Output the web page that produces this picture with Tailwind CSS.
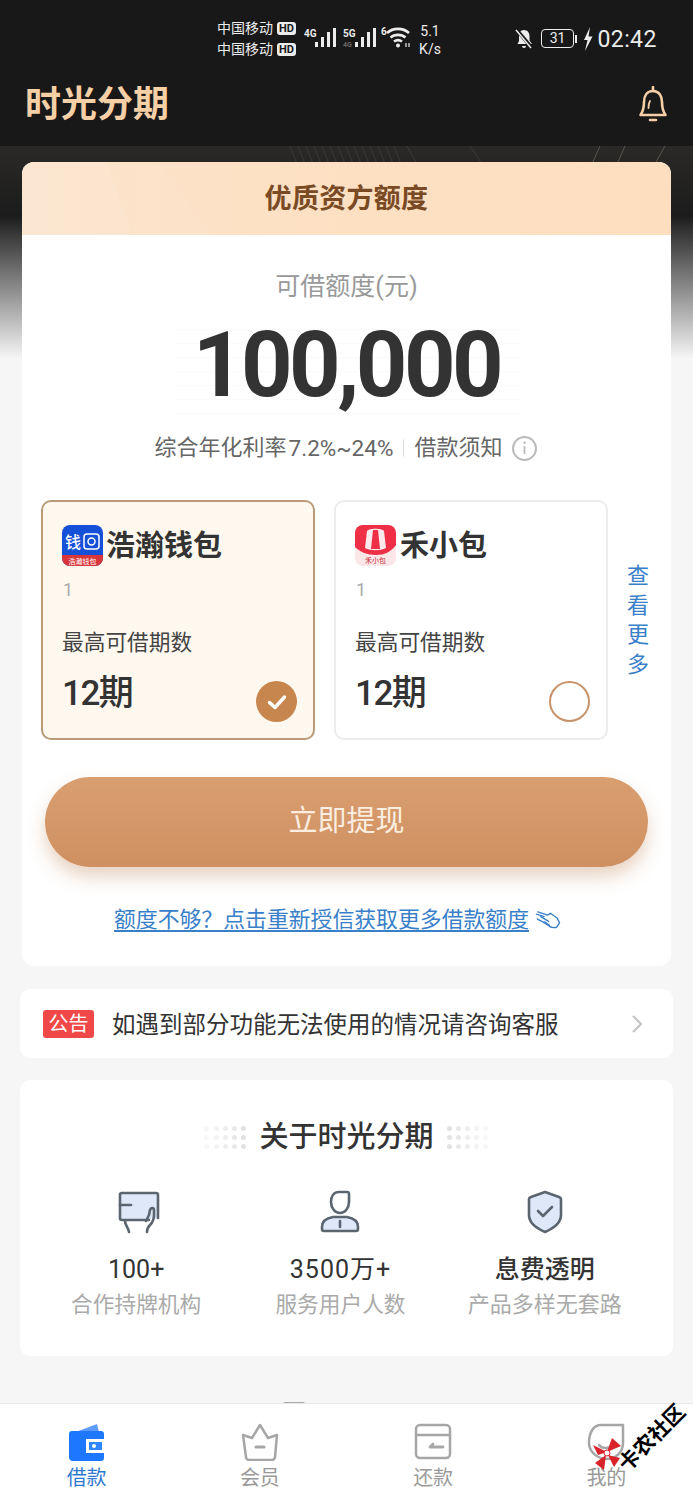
<!DOCTYPE html>
<html lang="zh-CN">
<head>
  <meta charset="UTF-8" />
  <meta name="viewport" content="width=device-width, initial-scale=1.0" />
  <title>时光分期</title>
  <script src="https://cdn.jsdelivr.net/npm/@tailwindcss/browser@4"></script>
</head>
<body class="bg-[#f6f6f6] font-['Roboto','Noto_Sans_CJK_SC',sans-serif]">

<div class="relative w-[693px] h-[1500px] overflow-hidden flex flex-col">

  <!-- Status bar + app header -->
  <header class="h-[146px] bg-[#181818] shrink-0">
    <div class="h-[76px] flex items-start pt-[18px] pl-[217px]">
      <div class="w-[82px] text-[14px] leading-[21px] text-[#ececec]">
        <div class="flex items-center gap-[4px]">中国移动<span class="w-[19px] h-[13px] rounded-[3px] bg-[#ececec] text-[#181818] text-[11px] leading-[13px] font-bold text-center">HD</span></div>
        <div class="flex items-center gap-[4px]">中国移动<span class="w-[19px] h-[13px] rounded-[3px] bg-[#ececec] text-[#181818] text-[11px] leading-[13px] font-bold text-center">HD</span></div>
      </div>
      <!-- signal 4G -->
      <svg class="ml-[5px] mt-[8px]" width="34" height="22" viewBox="0 0 34 22">
        <text x="0" y="11" font-size="10" font-weight="700" fill="#ececec" font-family="Roboto">4G</text>
        <g fill="#ececec"><rect x="11" y="16" width="3" height="5"/><rect x="17" y="11" width="3" height="10"/><rect x="23" y="6" width="3" height="15"/><rect x="29" y="2" width="3" height="19"/></g>
      </svg>
      <!-- signal 5G -->
      <svg class="ml-[5px] mt-[8px]" width="34" height="22" viewBox="0 0 34 22">
        <text x="0" y="11" font-size="10" font-weight="700" fill="#ececec" font-family="Roboto">5G</text>
        <text x="0" y="21" font-size="7" font-weight="700" fill="#666" font-family="Roboto">4G</text>
        <g fill="#ececec"><rect x="12" y="16" width="3" height="5"/><rect x="18" y="11" width="3" height="10"/><rect x="24" y="6" width="3" height="15"/><rect x="30" y="2" width="3" height="19"/></g>
      </svg>
      <!-- wifi -->
      <svg class="ml-[4px] mt-[8px]" width="30" height="22" viewBox="0 0 30 22" fill="none" stroke="#ececec" stroke-width="2.600">
        <text x="0" y="9" font-size="10" font-weight="700" fill="#ececec" stroke="none" font-family="Roboto">6</text>
        <path d="M6 7C12 1.500 22 1.500 28 7"/><path d="M9.500 11.500c4-3.500 11-3.500 15 0"/><path d="M13 15.500c2.500-1.800 5.500-1.800 8 0"/>
        <circle cx="17" cy="19.500" r="2" fill="#ececec" stroke="none"/>
        <path d="M25 17v4M28 17v4" stroke-width="1.200"/>
      </svg>
      <div class="ml-[7px] w-[24px] text-[14px] leading-[18px] mt-[4px] text-[#ececec]">
        <div class="text-center">5.1</div><div class="text-center whitespace-nowrap">K/s</div>
      </div>
      <!-- bell off -->
      <svg class="ml-[72px] mt-[10px]" width="20" height="22" viewBox="0 0 20 22" fill="#ececec">
        <path d="M10 2c3.500 0 5.500 2.800 5.500 6v4.500L18 16H4.500l-1 0L5 13V8c0-3.200 1.500-6 5-6z"/>
        <path d="M8 18h4a2 2 0 0 1-4 0z"/>
        <path d="M2 1l16 19" stroke="#181818" stroke-width="3.500"/><path d="M2 2l15 18" stroke="#ececec" stroke-width="1.500"/>
      </svg>
      <!-- battery -->
      <div class="ml-[7px] mt-[11px] flex items-center">
        <div class="w-[33px] h-[19px] rounded-[4px] border-[1.5px] border-[#ececec] text-[#ececec] text-[14px] leading-[16px] text-center">31</div>
        <div class="w-[1.5px] h-[8px] bg-[#ececec] ml-[1px]"></div>
      </div>
      <svg class="ml-[6px] mt-[9px]" width="10" height="24" viewBox="0 0 10 24" fill="#ececec"><path d="M7 0L1 13h3.500L2 24 9.500 9.500H5.500z"/></svg>
      <div class="ml-[5px] mt-[8px] text-[23px] leading-[28px] tracking-[0.4px] text-[#ececec] whitespace-nowrap">02:42</div>
    </div>
    <div class="h-[70px] flex items-start justify-between pl-[25px] pr-[24px]">
      <div class="text-[36px] leading-[58px] font-bold text-[#f5cfa6] whitespace-nowrap">时光分期</div>
      <svg class="mt-[10px]" width="32" height="38" viewBox="0 0 32 38" fill="none" stroke="#f5cfa6" stroke-width="2.600" stroke-linejoin="round">
        <path d="M16 5c-6 0-9 5-9 11 0 5-.8 9-3.500 13h25c-2.700-4-3.500-8-3.500-13 0-6-3-11-9-11z" />
        <path d="M16 1v4M13 34h6" stroke-linecap="round"/>
        <path d="M11.500 22c0-3 .3-5 1.500-7" stroke-width="1.800" stroke-linecap="round"/>
      </svg>
    </div>
  </header>

  <!-- Dark fade behind the first card -->
  <div class="absolute top-[146px] left-0 w-full h-[214px] bg-[linear-gradient(#2a2927_0px,#1c1c1c_70px,#f8f8f8_214px)]">
    <svg class="absolute top-0 left-[280px]" width="413" height="18" viewBox="0 0 413 18" fill="none" stroke="#3d3b38" stroke-width="1">
      <path d="M10 0l7 18M18 0l7 18M26 0l7 18M34 0l7 18M42 0l7 18M50 0l7 18M58 0l7 18M66 0l7 18M74 0l7 18M82 0l7 18M90 0l7 18M98 0l7 18M106 0l7 18M114 0l7 18M190 0l12 18M127 0l10 18" />
      <path d="M320 0l-8 18M345 0l-8 18M385 0l-10 18" stroke="#5a5650"/>
    </svg>
  </div>

  <main class="relative flex-1 flex flex-col">
    <!-- Quota card -->
    <section class="relative mt-[16px] mx-[22px] w-[649px] h-[804px] bg-white rounded-[12px] overflow-hidden">
      <div class="relative h-[73px] bg-[linear-gradient(90deg,#fbe3cb,#fde0c2_50%,#fddfc0)] overflow-hidden flex items-center justify-center">
        <svg class="absolute top-0 left-0" width="220" height="73" viewBox="0 0 220 73">
          <polygon points="0,0 85,0 110,73 0,73" fill="#fff" opacity="0.12"/>
          <polygon points="85,0 135,0 190,73 110,73" fill="#fff" opacity="0.05"/>
        </svg>
        <h2 class="relative mt-[2px] text-[27px] font-bold text-[#7a4a24] leading-[73px] tracking-[0.3px]">优质资方额度</h2>
      </div>

      <div class="mt-[34px] text-center text-[25px] leading-[36px] text-[#999]">可借额度(元)</div>
      <div class="mt-[11px] h-[100px] text-center text-[90px] leading-[100px] font-bold text-[#333] tracking-[-3.500px] bg-[repeating-linear-gradient(#fff_0px,#fff_13px,#fbfbfb_13px,#fbfbfb_14px)] mx-[150px] whitespace-nowrap">100,000</div>
      <div class="mt-[16px] flex items-center justify-center text-[22px] leading-[32px] text-[#666]">
        <span>综合年化利率</span><span class="ml-[2px] text-[22.500px]">7.2%~24%</span>
        <span class="w-[1px] h-[18px] bg-[#ddd] mx-[10px]"></span>
        <span>借款须知</span>
        <svg class="ml-[9px]" width="27" height="27" viewBox="0 0 27 27" fill="none" stroke="#bbb" stroke-width="2"><circle cx="13.500" cy="13.500" r="11.500"/><path d="M13.500 11v8" stroke-width="1.800"/><circle cx="13.500" cy="7.800" r="1.200" fill="#bbb" stroke="none"/></svg>
      </div>

      <!-- Lenders -->
      <div class="mt-[36px] ml-[19px] flex items-start">
        <div class="relative w-[274px] h-[240px] rounded-[10px] border-[2px] border-[#bb9a78] bg-[#fff8ef] pl-[19px] pt-[23px]">
          <div class="flex items-center h-[41px]">
            <svg width="41" height="41" viewBox="0 0 41 41"><rect width="41" height="41" rx="8" fill="#1450d8"/><path d="M0 30h41v3a8 8 0 0 1-8 8H8a8 8 0 0 1-8-8z" fill="#d8363a"/><text x="3" y="23" font-size="16" font-weight="500" fill="#fff" font-family="Noto Sans CJK SC">钱</text><rect x="22" y="9" width="15" height="15" rx="3" fill="none" stroke="#fff" stroke-width="1.500"/><circle cx="29.500" cy="16.500" r="3.500" fill="none" stroke="#fff" stroke-width="1.500"/><text x="20.500" y="38.500" text-anchor="middle" font-size="7" fill="#fff" font-family="Noto Sans CJK SC">浩瀚钱包</text></svg>
            <span class="ml-[3px] mt-[2px] text-[29px] font-bold text-[#333] leading-[41px]">浩瀚钱包</span>
          </div>
          <div class="mt-[11px] text-[18px] leading-[26px] text-[#aaa] pl-[1px]">1</div>
          <div class="mt-[24px] text-[21.700px] leading-[32px] text-[#444] whitespace-nowrap">最高可借期数</div>
          <div class="mt-[10px] text-[35px] leading-[50px] font-medium tracking-[-1.500px] text-[#333]">12期</div>
          <div class="absolute right-[16px] bottom-[16px] w-[41px] h-[41px] rounded-full bg-[#c8864f] flex items-center justify-center">
            <svg width="20" height="16" viewBox="0 0 20 16" fill="none" stroke="#fff" stroke-width="3.500" stroke-linecap="round" stroke-linejoin="round"><path d="M2.500 8.500L8 13.500 17.500 3"/></svg>
          </div>
        </div>

        <div class="relative ml-[19px] w-[274px] h-[240px] rounded-[10px] border-[2px] border-[#ececec] bg-white pl-[19px] pt-[23px]">
          <div class="flex items-center h-[41px]">
            <svg width="41" height="41" viewBox="0 0 41 41"><rect width="41" height="41" rx="8" fill="#fbe6e8"/><path d="M8 0h25a8 8 0 0 1 8 8v12c-5 7-12 10-20 10-9 0-16-3-21-8V8a8 8 0 0 1 8-8z" fill="#ee2f45"/><path d="M12 6c2-3 15-3 17 0l2 17c-6 3-15 3-21 0z" fill="#fff" opacity=".9"/><path d="M18 5h5l2 19h-9z" fill="#ee2f45"/><text x="20.500" y="38" text-anchor="middle" font-size="7" fill="#c9333f" font-family="Noto Sans CJK SC">禾小包</text></svg>
            <span class="ml-[4px] mt-[2px] text-[29px] font-bold text-[#333] leading-[41px]">禾小包</span>
          </div>
          <div class="mt-[11px] text-[18px] leading-[26px] text-[#aaa] pl-[1px]">1</div>
          <div class="mt-[24px] text-[21.700px] leading-[32px] text-[#444] whitespace-nowrap">最高可借期数</div>
          <div class="mt-[10px] text-[35px] leading-[50px] font-medium tracking-[-1.500px] text-[#333]">12期</div>
          <div class="absolute right-[16px] bottom-[16px] w-[41px] h-[41px] rounded-full border-[2px] border-[#c8936a] bg-white"></div>
        </div>

        <a class="ml-[19px] mt-[61px] w-[22px] text-[22px] leading-[29.500px] text-[#3a80c9] text-center">查看更多</a>
      </div>

      <!-- Withdraw -->
      <button class="block mt-[37px] ml-[23px] w-[603px] h-[90px] rounded-full bg-[linear-gradient(180deg,#d99e70,#cf9061)] text-[#fbeee0] text-[29px] shadow-[0_10px_18px_rgba(190,130,80,0.35)]">立即提现</button>

      <div class="mt-[35px] pr-[18px] flex items-center justify-center">
        <a class="text-[21.850px] leading-[36px] text-[#3a80c9] underline underline-offset-[3px] whitespace-nowrap">额度不够&#xFF1F;点击重新授信获取更多借款额度</a>
        <svg class="ml-[6px]" width="26" height="20" viewBox="0 0 27 20" fill="none" stroke="#3a80c9" stroke-width="1.400" stroke-linecap="round" stroke-linejoin="round">
          <path d="M1.500 4l8 2.500M3 1.500l10 3.500 3-2 7 5 2.500 5-3 4.500c-4 1-7 0-9-2L8 12 2.500 9"/><path d="M6 6.500l8 5M10 12l5 3.500"/>
        </svg>
      </div>
    </section>

    <!-- Notice -->
    <section class="mt-[23px] mx-[20px] w-[653px] h-[69px] bg-white rounded-[10px] flex items-center pl-[23px]">
      <span class="w-[51px] h-[28px] rounded-[3px] bg-[#f04848] text-white text-[20px] leading-[28px] text-center">公告</span>
      <span class="ml-[18px] mt-[4px] text-[23.500px] text-[#333] whitespace-nowrap">如遇到部分功能无法使用的情况请咨询客服</span>
      <svg class="ml-[72px]" width="12" height="20" viewBox="0 0 12 20" fill="none" stroke="#c4c4c4" stroke-width="2.200"><path d="M2 2l8 8-8 8"/></svg>
    </section>

    <!-- About -->
    <section class="mt-[22px] mx-[20px] w-[653px] h-[276px] bg-white rounded-[10px]">
      <div class="pt-[34px] flex items-center justify-center">
        <div class="grid grid-cols-5 gap-[4px] w-[42px]">
          <i class="w-[5px] h-[5px] rounded-full bg-[#f7f7f7]"></i><i class="w-[5px] h-[5px] rounded-full bg-[#f3f3f3]"></i><i class="w-[5px] h-[5px] rounded-full bg-[#eeeeee]"></i><i class="w-[5px] h-[5px] rounded-full bg-[#e8e8e8]"></i><i class="w-[5px] h-[5px] rounded-full bg-[#e2e2e2]"></i>
          <i class="w-[5px] h-[5px] rounded-full bg-[#f7f7f7]"></i><i class="w-[5px] h-[5px] rounded-full bg-[#f3f3f3]"></i><i class="w-[5px] h-[5px] rounded-full bg-[#eeeeee]"></i><i class="w-[5px] h-[5px] rounded-full bg-[#e8e8e8]"></i><i class="w-[5px] h-[5px] rounded-full bg-[#e2e2e2]"></i>
          <i class="w-[5px] h-[5px] rounded-full bg-[#f7f7f7]"></i><i class="w-[5px] h-[5px] rounded-full bg-[#f3f3f3]"></i><i class="w-[5px] h-[5px] rounded-full bg-[#eeeeee]"></i><i class="w-[5px] h-[5px] rounded-full bg-[#e8e8e8]"></i><i class="w-[5px] h-[5px] rounded-full bg-[#e2e2e2]"></i>
        </div>
        <h3 class="mx-[13px] text-[29px] leading-[46px] font-medium text-[#333]">关于时光分期</h3>
        <div class="grid grid-cols-5 gap-[4px] w-[42px]">
          <i class="w-[5px] h-[5px] rounded-full bg-[#e2e2e2]"></i><i class="w-[5px] h-[5px] rounded-full bg-[#e8e8e8]"></i><i class="w-[5px] h-[5px] rounded-full bg-[#eeeeee]"></i><i class="w-[5px] h-[5px] rounded-full bg-[#f3f3f3]"></i><i class="w-[5px] h-[5px] rounded-full bg-[#f7f7f7]"></i>
          <i class="w-[5px] h-[5px] rounded-full bg-[#e2e2e2]"></i><i class="w-[5px] h-[5px] rounded-full bg-[#e8e8e8]"></i><i class="w-[5px] h-[5px] rounded-full bg-[#eeeeee]"></i><i class="w-[5px] h-[5px] rounded-full bg-[#f3f3f3]"></i><i class="w-[5px] h-[5px] rounded-full bg-[#f7f7f7]"></i>
          <i class="w-[5px] h-[5px] rounded-full bg-[#e2e2e2]"></i><i class="w-[5px] h-[5px] rounded-full bg-[#e8e8e8]"></i><i class="w-[5px] h-[5px] rounded-full bg-[#eeeeee]"></i><i class="w-[5px] h-[5px] rounded-full bg-[#f3f3f3]"></i><i class="w-[5px] h-[5px] rounded-full bg-[#f7f7f7]"></i>
        </div>
      </div>

      <div class="mt-[30px] ml-[14px] w-[613px] grid grid-cols-3 text-center">
        <div class="flex flex-col items-center">
          <svg class="ml-[6px]" width="44" height="44" viewBox="0 0 44 44" fill="none" stroke="#5b6570" stroke-width="2.600" stroke-linecap="round" stroke-linejoin="round">
            <rect x="4" y="3" width="36" height="26" fill="#dfe8f8" stroke="none"/>
            <path d="M32 30H5a2 2 0 0 1-2-2V5a2 2 0 0 1 2-2h34a2 2 0 0 1 2 2v23"/><path d="M3 15h11"/>
            <path d="M8 31c0 4 3 6 4 11M30 42c0-3 1-5 3-7 3-3 4-6 4-10v-5c0-2-3-3-4 0l-1 5-3 6"/>
          </svg>
          <div class="mt-[20px] text-[25px] leading-[32px] text-[#333]">100+</div>
          <div class="mt-[3px] text-[21.700px] leading-[32px] text-[#aaa] whitespace-nowrap">合作持牌机构</div>
        </div>
        <div class="flex flex-col items-center">
          <svg width="44" height="44" viewBox="0 0 44 44" fill="none" stroke="#5b6570" stroke-width="2.600" stroke-linecap="round" stroke-linejoin="round">
            <path d="M15 27c-6 1-11 4-11 10v2a2 2 0 0 0 2 2h32a2 2 0 0 0 2-2v-2c0-6-5-9-11-10z" fill="#dfe8f8"/>
            <path d="M21 2h8a2 2 0 0 1 2 2v8c0 6-4 11-9 11s-9-5-9-11c0-6 3-10 8-10z" fill="#fff"/>
            <path d="M22 31v6"/>
          </svg>
          <div class="mt-[20px] text-[25px] leading-[32px] tracking-[1px] text-[#333]">3500万+</div>
          <div class="mt-[3px] text-[21.700px] leading-[32px] text-[#aaa] whitespace-nowrap">服务用户人数</div>
        </div>
        <div class="flex flex-col items-center">
          <svg width="44" height="44" viewBox="0 0 44 44" fill="none" stroke="#5b6570" stroke-width="2.600" stroke-linecap="round" stroke-linejoin="round">
            <path d="M22 2l14 5c1 .4 2 1 2 2v16c0 8-9 14-16 17C15 39 6 33 6 25V9c0-1 1-1.600 2-2z" fill="#dfe8f8"/>
            <path d="M15 21l5 5 9-9"/>
          </svg>
          <div class="mt-[20px] text-[25px] leading-[32px] font-medium text-[#333]">息费透明</div>
          <div class="mt-[3px] text-[22px] leading-[32px] text-[#aaa] whitespace-nowrap">产品多样无套路</div>
        </div>
      </div>
    </section>
  </main>

  <!-- Tab bar -->
  <div class="absolute left-[283px] top-[1402px] w-[22px] h-[2px] rounded-t-full bg-[#aaa]"></div>
  <nav class="absolute left-0 bottom-0 w-full h-[97px] bg-white border-t border-[#e8e8e8] grid grid-cols-4 text-center text-[20px] leading-[28px] text-[#999]">
    <a class="flex flex-col items-center pt-[19px] text-[#2f7ad0]">
      <svg width="38" height="38" viewBox="0 0 38 38"><path d="M5 10L29 1l2 8z" fill="#5d9bff"/><path d="M4 8h29a3 3 0 0 1 3 3v24a3 3 0 0 1-3 3H5a4 4 0 0 1-4-4V11a3 3 0 0 1 3-3z" fill="#1d78ff"/><rect x="18" y="16" width="19" height="14" fill="#fff"/><rect x="21" y="19" width="13" height="8" fill="#2f86ff"/><circle cx="26" cy="23" r="2" fill="#fff"/></svg>
      <span class="mt-[3px]">借款</span>
    </a>
    <a class="flex flex-col items-center pt-[19px]">
      <svg width="38" height="38" viewBox="0 0 38 38" fill="none" stroke="#a6a6a6" stroke-width="2.500" stroke-linejoin="round" stroke-linecap="round"><path d="M2 12l9 3 8-13 8 13 9-3-2 22a3 3 0 0 1-3 3H8a3 3 0 0 1-3-3z"/><path d="M15 24h8" stroke-width="3"/></svg>
      <span class="mt-[3px]">会员</span>
    </a>
    <a class="flex flex-col items-center pt-[19px]">
      <svg width="38" height="38" viewBox="0 0 38 38" fill="none" stroke="#a6a6a6" stroke-width="2.500" stroke-linejoin="round" stroke-linecap="round"><rect x="2" y="2" width="34" height="33" rx="4"/><path d="M2 12h34"/><path d="M29 24H16l3-3" stroke-width="2.800"/></svg>
      <span class="mt-[3px]">还款</span>
    </a>
    <a class="flex flex-col items-center pt-[19px]">
      <svg width="38" height="38" viewBox="0 0 38 38" fill="none" stroke="#a6a6a6" stroke-width="2.500" stroke-linejoin="round" stroke-linecap="round"><path d="M14 2h22v18c0 9-7 16-16 16S2 29 2 20C2 10 6 2 14 2z"/><path d="M12 22c3 4 10 4 13 0"/></svg>
      <span class="mt-[3px]">我的</span>
    </a>
  </nav>

  <!-- Forum watermark -->
  <div class="absolute left-[598px] top-[1407px] w-[90px] h-[70px]">
    <div class="absolute left-[12px] top-[19px] text-[21px] leading-[24px] font-bold text-black whitespace-nowrap rotate-[-45deg] [text-shadow:0_0_2px_#fff]">卡农社区</div>
    <svg class="absolute left-[-6px] top-[30px]" width="30" height="34" viewBox="0 0 30 34" fill="#d9222a"><path d="M15 15L20 1l9 8z"/><path d="M15 15L1 8l5 10z"/><path d="M14 18L3 26l9 7z"/><path d="M16 18l12 3-6 9z"/><circle cx="15" cy="16" r="3" fill="#fff" stroke="#d9222a"/></svg>
  </div>

</div>
</body>
</html>
